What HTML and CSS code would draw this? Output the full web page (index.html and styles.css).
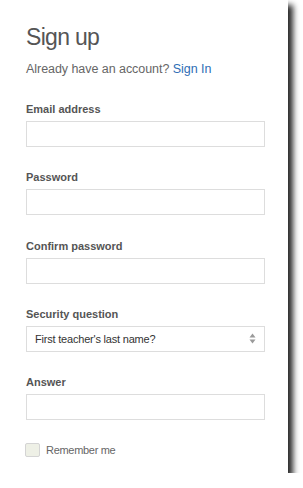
FILE: index.html
```html
<!DOCTYPE html>
<html>
<head>
<meta charset="utf-8">
<link rel="stylesheet" href="styles.css">
</head>
<body>
<div class="card">
  <h1 class="title">Sign up</h1>
  <p class="subtitle">Already have an account? <a class="link" href="#">Sign In</a></p>
  <div class="field">
    <label class="label">Email address</label>
    <div class="input"></div>
  </div>
  <div class="field">
    <label class="label">Password</label>
    <div class="input"></div>
  </div>
  <div class="field">
    <label class="label">Confirm password</label>
    <div class="input"></div>
  </div>
  <div class="field">
    <label class="label">Security question</label>
    <div class="input select">
      <span class="select-text">First teacher's last name?</span>
      <svg class="arrows" width="7" height="11" viewBox="0 0 7 11"><path d="M3.5 0.5 L6.5 4.5 L0.5 4.5 Z M3.5 10.5 L6.5 6.5 L0.5 6.5 Z" fill="#9a9a9a"/></svg>
    </div>
  </div>
  <div class="field">
    <label class="label">Answer</label>
    <div class="input"></div>
  </div>
  <div class="remember">
    <span class="checkbox"></span>
    <span class="remember-text">Remember me</span>
  </div>
</div>
</body>
</html>
```
FILE: styles.css
```css
html, body {
  margin: 0;
  padding: 0;
  background: #fff;
}
body {
  font-family: "Liberation Sans", Arial, sans-serif;
}
.card {
  width: 288px;
  height: 473px;
  box-sizing: border-box;
  padding: 23px 23px 0 26px;
  background: #fff;
  box-shadow: 5px 5px 6px rgba(0, 0, 0, 0.85);
  display: flex;
  flex-direction: column;
}
.title {
  margin: 0;
  font-size: 23px;
  line-height: 28px;
  font-weight: normal;
  letter-spacing: -0.7px;
  color: #555;
}
.subtitle {
  margin: 10px 0 0;
  font-size: 12.5px;
  line-height: 16px;
  letter-spacing: -0.05px;
  color: #666;
}
.link {
  color: #2f6db5;
  text-decoration: none;
}
.field {
  display: flex;
  flex-direction: column;
  gap: 5px;
  margin-top: 23.3px;
}
.subtitle + .field {
  margin-top: 25px;
}
.label {
  font-size: 11px;
  line-height: 14px;
  font-weight: bold;
  color: #555;
}
.input {
  height: 26px;
  box-sizing: border-box;
  border: 1px solid #ddd;
  background: #fff;
}
.select {
  display: flex;
  align-items: center;
  justify-content: space-between;
  padding: 0 8px 0 8px;
}
.select-text {
  font-size: 11px;
  letter-spacing: -0.2px;
  color: #333;
}
.arrows {
  display: block;
}
.remember {
  display: flex;
  align-items: center;
  gap: 6px;
  margin-top: 23px;
}
.checkbox {
  width: 15px;
  height: 14px;
  box-sizing: border-box;
  border: 1px solid #d4d4d4;
  border-radius: 2px;
  background: #eef0e6;
  margin-left: -1px;
}
.remember-text {
  font-size: 11px;
  letter-spacing: -0.3px;
  color: #666;
}
```
